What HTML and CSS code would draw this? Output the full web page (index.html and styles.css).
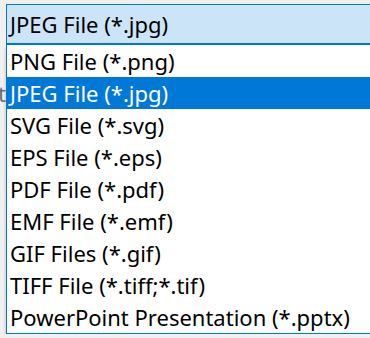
FILE: index.html
```html
<!DOCTYPE html>
<html>
<head>
<meta charset="utf-8">
<link rel="stylesheet" href="styles.css">
</head>
<body>
<div class="page">
  <!-- 下拉框后面露出的一点标签文字 -->
  <div class="gutter"><span class="behind">t</span></div>
  <div class="combo">
    <div class="field">JPEG File (*.jpg)</div>
    <ul class="list">
      <li>PNG File (*.png)</li>
      <li class="selected">JPEG File (*.jpg)</li>
      <li>SVG File (*.svg)</li>
      <li>EPS File (*.eps)</li>
      <li>PDF File (*.pdf)</li>
      <li>EMF File (*.emf)</li>
      <li>GIF Files (*.gif)</li>
      <li>TIFF File (*.tiff;*.tif)</li>
      <li>PowerPoint Presentation (*.pptx)</li>
    </ul>
  </div>
</div>
</body>
</html>
```

FILE: styles.css
```css
body {
  margin: 0;
  background: #f0f0f0;
  overflow: hidden;
  font: 22px "Noto Sans", "Open Sans", sans-serif;
  color: #000;
}

.page {
  display: flex;
}

.gutter {                 /* 左边6px的缝隙 */
  width: 6px;
  overflow: hidden;
  display: flex;
  justify-content: flex-end;
  padding-top: 78px;
}

.behind {
  color: #6d6d6d;
  line-height: 30px;
  height: 30px;
}

.combo {
  flex: 1;
  margin-top: 4px;
}

.field {                  /* 顶部选中值 */
  height: 38px;
  line-height: 38px;
  padding-left: 3px;
  background: #cce4f7;
  border: 1px solid #0078d7;
  border-bottom-width: 2px;
  border-right: none;
}

.list {                   /* 展开的列表 */
  list-style: none;
  margin: 0;
  padding: 0;
  background: #fff;
  border-left: 1px solid #0078d7;
  border-bottom: 1px solid #0078d7;
  box-shadow: 0 3px 3px rgba(0,0,0,0.25);
}

.list li {
  height: 32px;
  line-height: 32px;
  padding-left: 3px;
  white-space: nowrap;
}

.list li.selected {
  background: #0078d7;
  color: #fff;
}
```
